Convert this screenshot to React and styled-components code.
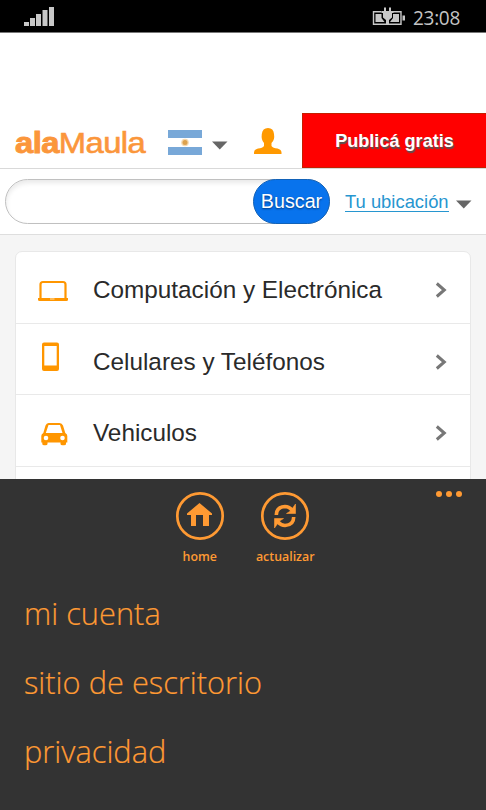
import React from 'react';
import styled, { createGlobalStyle } from 'styled-components';

const Global = createGlobalStyle`
  * { box-sizing: border-box; }
  body { margin: 0; background: #fff; }
  button { border: 0; padding: 0; background: none; }
  svg { display: block; flex: none; }
`;

const Phone = styled.div`
  width: 486px;
  height: 810px;
  display: flex;
  flex-direction: column;
  overflow: hidden;
  background: #fff;
  font-family: "Liberation Sans", Arial, sans-serif;
`;

const StatusBar = styled.div`
  height: 33px;
  flex: none;
  display: flex;
  align-items: flex-start;
  padding: 0 24px;
  background: #000;
  border-bottom: 1px solid #777;
`;

const Clock = styled.span`
  width: 49px;
  margin-left: 8px;
  padding-top: 5px;
  font: 400 20px/25px "Open Sans", "Noto Sans", sans-serif;
  color: #c4c4c4;
  letter-spacing: -0.3px;
  white-space: nowrap;
  transform: scaleX(0.95);
  transform-origin: left;
`;

const Spacer = styled.div`
  flex: 1;
`;

const Header = styled.header`
  height: 56px;
  margin-top: 80px;
  flex: none;
  display: flex;
  align-items: flex-start;
  padding-left: 15px;
  border-bottom: 1px solid #d9d9d9;
`;

const Logo = styled.div`
  width: 131px;
  margin-right: 22px;
  padding-top: 15px;
  font: 400 28.6px/31px "Liberation Sans", Arial, sans-serif;
  color: #fb963b;
  letter-spacing: -0.5px;
  white-space: nowrap;
  -webkit-text-stroke: 0.6px #fb963b;
  transform: scaleX(1.145);
  transform-origin: left;

  b { -webkit-text-stroke: 0.9px #fb963b; }
`;

const Flag = styled.svg`
  margin-top: 17px;
`;

const Caret = styled.svg`
  margin: ${(p) => p.$margin};
`;

const Person = styled.svg`
  margin-top: 15px;
`;

const Publish = styled.button`
  width: 184px;
  height: 55px;
  margin-left: auto;
  background: #f00;
  border: 1px solid #c42000;
  border-right: 0;
  color: #fff;
  font: 700 18.1px/54px "Liberation Sans", Arial, sans-serif;
  text-shadow: 1px 2px 1px #555;
`;

const SearchRow = styled.div`
  height: 66px;
  flex: none;
  display: flex;
  padding: 10px 0 0 5px;
  border-bottom: 1px solid #dedede;
`;

const SearchField = styled.div`
  width: 325px;
  height: 45px;
  display: flex;
  justify-content: flex-end;
  border-radius: 23px;
  border: 1px solid #c0c0c0;
  box-shadow: inset 0 3px 5px #e9e9e9;
`;

const SearchButton = styled.button`
  width: 77px;
  height: 45px;
  margin: -1px -1px 0 0;
  border-radius: 23px;
  background: #0873ed;
  border: 1px solid #1262b8;
  color: #fff;
  font: 400 19.7px/43px "Liberation Sans", Arial, sans-serif;
  text-shadow: 0 1px 2px #043a7c;
`;

const Location = styled.a`
  height: 22px;
  margin: 11px 0 0 15px;
  border-bottom: 1px solid #2796d0;
  color: #2796d0;
  font-size: 18.4px;
  line-height: 24px;
  white-space: nowrap;
`;

const Content = styled.main`
  height: 244px;
  flex: none;
  overflow: hidden;
  padding: 16px 15px 0;
  background: #f5f5f5;
`;

const Card = styled.div`
  height: 300px;
  border: 1px solid #e8e8e8;
  border-radius: 7px;
  background: #fff;
`;

const Row = styled.div`
  height: 71.7px;
  display: flex;
  align-items: center;
  padding: 5px 23px 0 22px;
  border-bottom: 1.5px solid #e9e9e9;
`;

const IconSlot = styled.div`
  width: 55px;
  height: 32px;
  flex: none;
`;

const RowText = styled.span`
  flex: 1;
  font-size: 24.3px;
  line-height: 28px;
  color: #2a2a2a;
  white-space: nowrap;
`;

const AppBar = styled.section`
  position: relative;
  flex: 1;
  background: #333;
  color: #ff9a33;
  font-family: "Open Sans", "Noto Sans", sans-serif;
`;

const More = styled.svg`
  position: absolute;
  top: 12px;
  right: 23px;
`;

const Actions = styled.div`
  height: 103px;
  display: flex;
  padding-left: 157px;
`;

const Action = styled.button`
  width: 85.5px;
  display: flex;
  flex-direction: column;
  align-items: center;
  padding-top: 11.5px;
  color: inherit;
  font: 600 12.4px/17px "Open Sans", "Noto Sans", sans-serif;

  svg { margin-bottom: 7.5px; }
`;

const MenuItem = styled.div`
  height: 69px;
  padding-left: 24px;
  font-size: 30.8px;
  font-weight: 300;
  line-height: 62px;
  white-space: nowrap;
  -webkit-text-stroke: 0.2px #ff9a33;
`;

const Signal = () => (
  <svg width="32" height="32" fill="#c8c8c8">
    <path d="M0 22h5v4H0zM6 18h5v8H6zM12 14h5v12h-5zM18.500 10h5v16h-5zM25 7h5v19h-5z" />
  </svg>
);

const Battery = () => (
  <svg width="33" height="32" viewBox="372 0 33 32">
    <path d="M381.500 11.700h-8v12.600H386M393 11.700h8v12.600h-12" fill="none" stroke="#c8c8c8" strokeWidth="1.400" />
    <path d="M375.500 14h6v4l3 4h-9zM399 14h-6v4l-3 4h9zM402.500 15.500h2.500v5h-2.500z" fill="#c8c8c8" />
    <path d="M384 7.500h2V11h3V7.500h2V11h2.500v2H392v4.500l-3 2.500v5h-3v-5l-3-2.500V13h-1.500v-2h2.500z" fill="#c8c8c8" />
  </svg>
);

const DownCaret = ({ margin }) => (
  <Caret $margin={margin} width="16" height="9">
    <path d="M0 0.500h15.500L7.750 8.500z" fill="#666" />
  </Caret>
);

const Laptop = () => (
  <svg width="31" height="32" viewBox="38.500 273 31 32">
    <path d="M41 297v-13.500a2.500 2.500 0 0 1 2.500-2.500h20a2.500 2.500 0 0 1 2.500 2.500V297" fill="none" stroke="#ff9600" strokeWidth="2.200" />
    <path d="M38.500 297h30v1.500q0 1.500-1.500 1.500H40q-1.500 0-1.500-1.500z" fill="#ff9600" />
    <path d="M50.500 298h4.500" stroke="#ffe0aa" />
  </svg>
);

const Mobile = () => (
  <svg width="31" height="32" viewBox="39 346 31 32" overflow="visible">
    <path fillRule="evenodd" d="M45 342.500h13q2 0 2 2v24.500q0 2-2 2H45q-2 0-2-2v-24.500q0-2 2-2zM45.300 346v19.500h12.400V346z" fill="#ff9600" />
  </svg>
);

const Car = () => (
  <svg width="31" height="32" viewBox="38.500 417 31 32">
    <path fillRule="evenodd" d="M49 423h11q2.500 0 3.500 2.500l2.300 7.500q2 1 2 3v6.500h-1.300v1.500q0 1.300-2 1.300h-1.500q-2 0-2-1.300v-1.500H48v1.500q0 1.300-2 1.300h-1.200q-2 0-2-1.300v-1.500h-1V436q0-2 2-3l2.200-7.500q1-2.500 3-2.500zM49 425l-2.700 8H63l-2.500-8z" fill="#ff9600" />
    <circle cx="46.500" cy="438" r="2.300" fill="#fff" />
    <circle cx="63" cy="438" r="2.300" fill="#fff" />
  </svg>
);

const Chevron = () => (
  <svg width="12" height="16">
    <path d="M1.800 1.500 9.300 8l-7.500 6.500" fill="none" stroke="#777" strokeWidth="3" />
  </svg>
);

const Home = () => (
  <svg width="50" height="50" fill="#ff9a33">
    <circle cx="25" cy="25" r="22.700" fill="none" stroke="#ff9a33" strokeWidth="2.700" />
    <path d="M24.500 12 37 22.500V24h-3v11h-6V24h-7v11h-5V24h-4v-1.500z" />
  </svg>
);

const Refresh = () => (
  <svg width="50" height="50" fill="none" stroke="#ff9a33">
    <circle cx="25" cy="25" r="22.700" strokeWidth="2.700" />
    <path d="M16.300 24q0-8 8.700-8.500 4 0 7 3.500M33.700 26q0 8-8.700 8.500-4 0-7-3.500" strokeWidth="3.600" />
    <path d="M35.500 13v9.500H26.500l4-2.500zM14.500 37v-9.500h9L19.500 30z" fill="#ff9a33" strokeWidth="0.600" />
  </svg>
);

const categories = [
  ['Computación y Electrónica', Laptop],
  ['Celulares y Teléfonos', Mobile],
  ['Vehiculos', Car],
];

export default function App() {
  return (
    <Phone>
      <Global />
      <StatusBar>
        <Signal />
        <Spacer />
        <Battery />
        <Clock>23:08</Clock>
      </StatusBar>
      <Header>
        <Logo><b>ala</b>Maula</Logo>
        <Flag width="34" height="25">
          <path d="M0 0h34v8H0zM0 17h34v8H0z" fill="#78a8d8" />
          <circle cx="17" cy="12.500" r="3.800" fill="#f5d9b0" />
          <circle cx="17" cy="12.500" r="2.500" fill="#dda24e" />
        </Flag>
        <DownCaret margin="28px 26px 0 10px" />
        <Person width="29" height="27">
          <path d="M7.800 6Q8.500 0 14 0T20 6q1 6-2.500 9v3q1.500 2 6 2.500 4 1 4 4V26H0v-1.500q0-3 4-4 4.500-.5 6-2.500v-3Q7 12 7.800 6z" fill="#ff9900" />
        </Person>
        <Publish>Publicá gratis</Publish>
      </Header>
      <SearchRow>
        <SearchField><SearchButton>Buscar</SearchButton></SearchField>
        <Location>Tu ubicación</Location>
        <DownCaret margin="21px 0 0 7px" />
      </SearchRow>
      <Content>
        <Card>
          {categories.map(([label, Icon]) => (
            <Row key={label}>
              <IconSlot><Icon /></IconSlot>
              <RowText>{label}</RowText>
              <Chevron />
            </Row>
          ))}
        </Card>
      </Content>
      <AppBar>
        <More width="28" height="7" fill="#ff9a33">
          <circle cx="4" cy="3" r="3" />
          <circle cx="14" cy="3" r="3" />
          <circle cx="24" cy="3" r="3" />
        </More>
        <Actions>
          <Action><Home />home</Action>
          <Action><Refresh />actualizar</Action>
        </Actions>
        <MenuItem>mi cuenta</MenuItem>
        <MenuItem>sitio de escritorio</MenuItem>
        <MenuItem>privacidad</MenuItem>
      </AppBar>
    </Phone>
  );
}
